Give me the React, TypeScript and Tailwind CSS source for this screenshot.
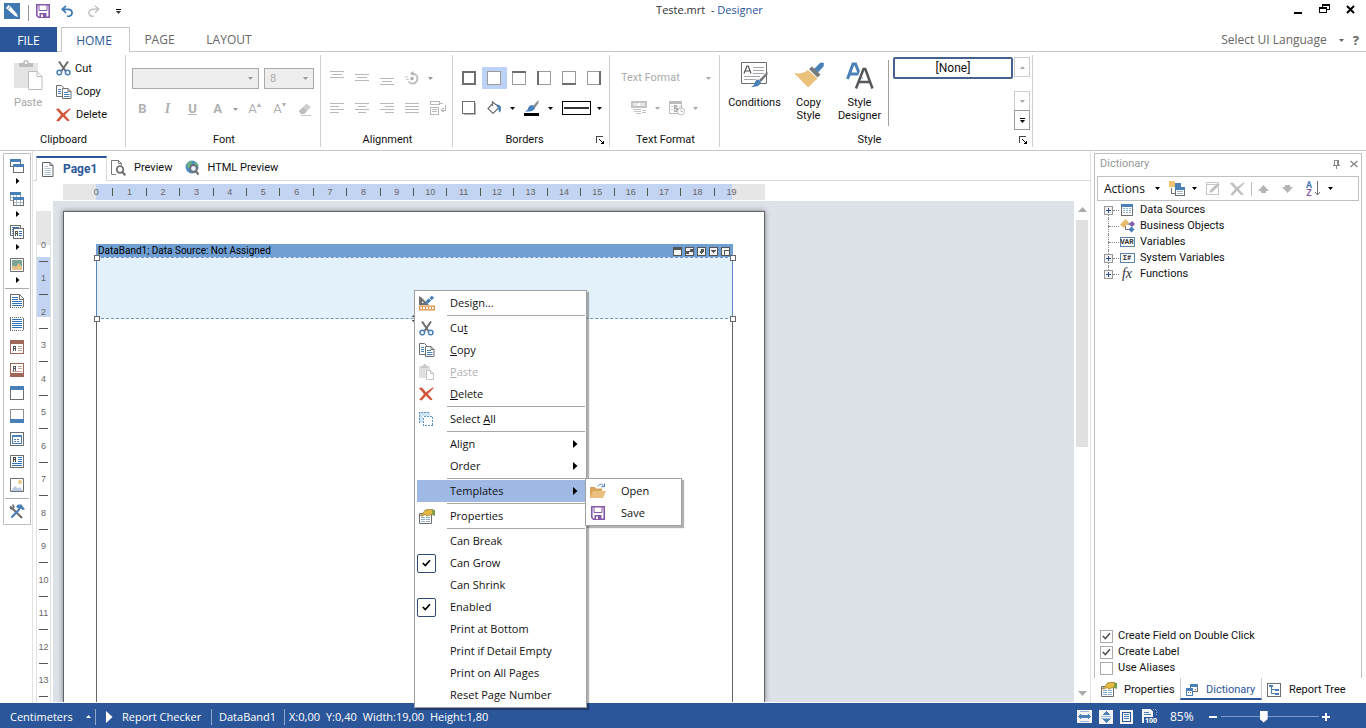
import { useState, type ReactNode } from "react";
import clsx from "clsx";

/* ---------- icons ---------- */

function Svg({
  w = 16,
  h,
  children,
  crisp = false,
}: {
  w?: number;
  h?: number;
  children: ReactNode;
  crisp?: boolean;
}) {
  const height = h ?? w;
  return (
    <svg
      width={w}
      height={height}
      viewBox={`0 0 ${w} ${height}`}
      fill="none"
      shapeRendering={crisp ? "crispEdges" : "auto"}
      className="shrink-0"
      aria-hidden="true"
    >
      {children}
    </svg>
  );
}

const Caret = ({ color = "#000" }: { color?: string }) => (
  <Svg w={5} h={3}>
    <path d="M0 0h5L2.5 3z" fill={color} />
  </Svg>
);

const RightArrow = () => (
  <Svg w={5} h={8}>
    <path d="M0 0v8l4.5-4z" fill="#000" />
  </Svg>
);

const SmallRight = () => (
  <Svg w={4} h={6}>
    <path d="M0 0v6l3.5-3z" fill="#000" />
  </Svg>
);

const LogoIcon = () => (
  <Svg w={16}>
    <path d="M0 0h16v16H0z" fill="#3f78b3" />
    <path d="M2 5 4.5 2l2 1.5 6.5 7.5 1 3-3-1L3.5 6.5z" fill="#fff" />
    <path d="M3.5 6.5 6.5 3.5" stroke="#3f78b3" strokeWidth=".7" />
  </Svg>
);

const SaveIcon = () => (
  <Svg w={14}>
    <path d="M.8.8h12.4v12.4H2.5L.8 11.5z" stroke="#8558a8" strokeWidth="1.6" />
    <path d="M3 1v5.5h8V1" stroke="#8558a8" strokeWidth="1" />
    <path d="M3.5 13.5V9h7v4.5" fill="#8558a8" />
    <path d="M5 10.5h2v2.5H5z" fill="#fff" />
  </Svg>
);

const UndoIcon = () => (
  <Svg w={14} h={12}>
    <path d="M5 .8 1.2 4.3 5 7.8M1.5 4.3H8a4 3.6 0 0 1 0 7H6" stroke="#3f78b3" strokeWidth="1.7" />
  </Svg>
);

const RedoIcon = () => (
  <Svg w={14} h={12}>
    <path d="M9 .8l3.8 3.5L9 7.8M12.5 4.3H6a4 3.6 0 0 0 0 7h2" stroke="#c4c4c4" strokeWidth="1.5" />
  </Svg>
);

const CutIcon = () => (
  <Svg w={15}>
    <path d="M3 .5 9.5 10M12 .5 5.5 10" stroke="#6d6e70" strokeWidth="2" />
    <circle cx="3.3" cy="11.5" r="2.3" stroke="#4a80b8" strokeWidth="1.5" />
    <circle cx="11.7" cy="11.5" r="2.3" stroke="#4a80b8" strokeWidth="1.5" />
  </Svg>
);

const CopyIcon = () => (
  <Svg w={16} h={14}>
    <path d="M6 11.5H.5V.5h5l2 2v2" stroke="#6d6e70" />
    <path d="M2 4.5h3M2 6.5h3M2 8.5h3" stroke="#4a80b8" />
    <path d="M6.5 3.5h5.5l3 3v7H6.5z" fill="#fff" stroke="#6d6e70" />
    <path d="M12 3.5v3h3" stroke="#6d6e70" />
    <path d="M8 7.5h4M8 9.5h5.5M8 11.5h5.5" stroke="#4a80b8" />
  </Svg>
);

const DeleteIcon = ({ color = "#d2583c" }: { color?: string }) => (
  <Svg w={15} h={14}>
    <path d="M0 1.2C1.5.2 3 .3 4 1.8L7 5.3 13.5.5l1.3.4L8.9 7l4.6 5.3-.6 1-2-.5L7 8.8 2.8 13.5l-2.6-.7L5 7z" fill={color} />
  </Svg>
);

const PasteBig = () => (
  <Svg w={29} h={31}>
    <path d="M0 3h24v25H0z" fill="#e4e4e4" />
    <path d="M5 3h4c0-4 6-4 6 0h4v4H5z" fill="#bdbdbd" />
    <circle cx="12" cy="2.7" r="1.2" fill="#fff" />
    <path d="M14.5 11.5H23l5 5v13H14.5z" fill="#fff" stroke="#bdbdbd" />
    <path d="M23 11.5v5h5" stroke="#bdbdbd" />
  </Svg>
);

const PasteSmall = () => (
  <Svg w={15} h={16}>
    <path d="M0 2h11v12H0z" fill="#e0e0e0" />
    <path d="M2 2h2c0-2.6 3.5-2.6 3.5 0H9v2H2z" fill="#c8c8c8" />
    <path d="M7.5 6.5h4l3 3v6h-7z" fill="#fff" stroke="#c4c4c4" />
    <path d="M11.5 6.5v3h3" stroke="#c4c4c4" />
  </Svg>
);

const EraserIcon = () => (
  <Svg w={14} h={14}>
    <path d="M1 9 8.5 1.5 13 5 6 12H3z" fill="#d0d0d0" />
    <path d="M1 9l4-3.5L9 9l-3 3H3z" fill="#bdbdbd" />
    <path d="M3 13.5h10" stroke="#c8c8c8" />
  </Svg>
);

const DesignIcon = () => (
  <Svg w={16}>
    <path d="M0 1l3 2 7 7H0z" fill="#6d6e70" />
    <path d="M3 6v2h2z" fill="#fff" />
    <path d="M6 9l1-3 6-5.5L15 3 9 8.5z" fill="#4a80b8" />
    <path d="M10 3l3 3" stroke="#fff" />
    <path d="M.7 11.2h14.6v3.6H.7z" fill="#fff" stroke="#dc8c3c" strokeWidth="1.2" />
    <path d="M3.5 12v2M6.5 12v2M9.5 12v2M12.5 12v2" stroke="#dc8c3c" />
  </Svg>
);

const SelectAllIcon = () => (
  <Svg w={15} crisp>
    <path d="M0 0h11v4H4v7H0z" fill="#cfe6f5" />
    <path d="M.5 11V.5H11" stroke="#5e93c4" strokeDasharray="2 1" />
    <path d="M4.5 4.5h9v9h-9z" fill="#fff" stroke="#5e93c4" strokeDasharray="2 1" />
  </Svg>
);

const PropertiesIcon = () => (
  <Svg w={16} h={15}>
    <path d="M.5 4.5h12v10H.5z" fill="#fff" stroke="#6d6e70" />
    <path d="M2 8.5h4M7 8.5h4M2 10.5h4M7 10.5h4M2 12.5h4M7 12.5h4" stroke="#8ab0cf" />
    <path d="M1 6.5 3.5 5 6 1.2 9 .5h5v5l-4 .5-2 1.2-2-1.7L3 7z" fill="#e5b83f" stroke="#8d7430" strokeWidth=".7" />
    <path d="M13.5 1H16v6l-2.5-1z" fill="#6f9f4b" />
  </Svg>
);

const OpenIcon = () => (
  <Svg w={16}>
    <path d="M0 15V4h5l1 1.5h6V8" fill="#d8a55c" />
    <path d="M3 8h13l-3 7H0z" fill="#eabf7f" />
    <path d="M8 3.5C9 .5 12 .5 13.5 3M14.5.5v3.2h-3.2" stroke="#4a80b8" />
  </Svg>
);

const PageIcon = () => (
  <Svg w={12} h={15}>
    <path d="M.5.5h7.5l3 3v11H.5z" fill="#fff" stroke="#5f6368" />
    <path d="M8 .5v3h3" stroke="#5f6368" />
    <path d="M2.5 4.5h4M2.5 6.5h6.5M2.5 8.5h6.5M2.5 10.5h6.5M2.5 12.5h6.5" stroke="#b3c6d9" />
  </Svg>
);

const PreviewIcon = () => (
  <Svg w={15} h={16}>
    <path d="M5 14.5H.5V.5h7l3 3v2M7.5.5v3h3" stroke="#77797c" />
    <circle cx="9" cy="9.5" r="3.3" fill="#fff" stroke="#6d6e70" strokeWidth="1.7" />
    <path d="m11.3 12 3 3.3" stroke="#6d6e70" strokeWidth="2.2" />
  </Svg>
);

const HtmlPreviewIcon = () => (
  <Svg w={14} h={16}>
    <circle cx="7" cy="7" r="6.5" fill="#4a8cc4" />
    <path d="M2 4c2-3 4-3 6-3L6 4l-1 3-3 1zM9 2l3 1 1 4-3-1z" fill="#6fb07a" />
    <circle cx="8.5" cy="8.5" r="3.3" fill="#e6eef5" stroke="#6d6e70" strokeWidth="1.7" />
    <path d="m10.8 11.3 2.8 3.3" stroke="#6d6e70" strokeWidth="2.2" />
  </Svg>
);

/* toolbox icons */
const BandsIcon = () => (
  <Svg w={14} h={14} crisp>
    <path d="M.5.5h10v7H.5z" fill="#fff" stroke="#6d6e70" />
    <path d="M0 0h11v3H0z" fill="#4a80b8" />
    <path d="M3.5 5.5h10v8h-10z" fill="#fff" stroke="#6d6e70" />
    <path d="M3 5h11v3H3z" fill="#4a80b8" />
  </Svg>
);
const CrossBandsIcon = () => (
  <Svg w={14} h={14} crisp>
    <path d="M.5.5h10v8H.5z" fill="#fff" stroke="#9a9c9f" />
    <path d="M0 0h11v3H0z" fill="#4a80b8" />
    <path d="M3.5 3v5M6.5 3v2M1 5.5h9" stroke="#9ec0dd" />
    <path d="M3.5 5.5h10v8h-10z" fill="#fff" stroke="#6d6e70" />
    <path d="M3 5h11v3H3z" fill="#4a80b8" />
    <path d="M6.5 8v5M10.5 8v5M4 10.5h9" stroke="#a9bccb" />
  </Svg>
);
const ComponentsIcon = () => (
  <Svg w={14} h={14} crisp>
    <path d="M.5.5h10v10H.5z" fill="#fff" stroke="#6d6e70" />
    <path d="M2 2.5h7M2 4.5h2M2 6.5h1M2 8.5h1" stroke="#2f74b8" />
    <path d="M3.5 3.5h10v10h-10z" fill="#fff" stroke="#6d6e70" />
    <path d="M5.5 11V6.5h2V11M5.5 8.5h2" stroke="#555" />
    <path d="M9 6.5h3M9 8.5h3M9 10.5h3" stroke="#2f74b8" />
  </Svg>
);
const PictureIcon = () => (
  <Svg w={14} h={14}>
    <path d="M.5.5h13v13H.5z" fill="#fff" stroke="#6d6e70" />
    <path d="M2 2h10v7H2z" fill="#79a693" />
    <path d="M2 12V9l2-1.5L6 9l2.5-4L12 9v3z" fill="#eac285" />
  </Svg>
);
const ReportTitleIcon = () => (
  <Svg w={14} h={14} crisp>
    <path d="M.5 13V.5h9l4 4V13" fill="#fff" stroke="#6d6e70" />
    <path d="M9.5 1v4h4" stroke="#6d6e70" />
    <path d="M0 13.5h14" stroke="#6d6e70" strokeDasharray="1 1" />
    <path d="M2 3h6v1H2zM2 5h6v1H2zM2 7h10v1H2zM2 9h10v1H2zM2 11h10v1H2z" fill="#2f74b8" />
  </Svg>
);
const ReportSummaryIcon = () => (
  <Svg w={14} h={14} crisp>
    <path d="M.5 1v12M13.5 1v12" stroke="#6d6e70" />
    <path d="M0 .5h14M0 13.5h14" stroke="#6d6e70" strokeDasharray="1 1" />
    <path d="M2 2h10v1H2zM2 4h10v1H2zM2 6h10v1H2zM2 8h10v1H2zM2 10h10v1H2z" fill="#2f74b8" />
  </Svg>
);
const TextBandIcon = ({ foot = false }: { foot?: boolean }) => (
  <Svg w={14} h={14} crisp>
    <path d="M.5.5h13v13H.5z" fill="#fff" stroke="#a0675a" />
    <path d={foot ? "M0 10h14v4H0z" : "M0 0h14v4H0z"} fill="#a0675a" />
    <path d={foot ? "M3.5 8V3.5h2V8M3.5 5.5h2" : "M3.5 11V6.5h2V11M3.5 8.5h2"} stroke="#555" />
    <path d={foot ? "M8 3.5h4M8 5.5h4M2 8.5h10" : "M8 6.5h4M8 8.5h4M8 10.5h4"} stroke="#c9a49b" />
  </Svg>
);
const BlueBandIcon = ({ foot = false }: { foot?: boolean }) => (
  <Svg w={14} h={14} crisp>
    <path d="M.5.5h13v13H.5z" fill="#fff" stroke={foot ? "#8f9194" : "#6d6e70"} />
    <path d={foot ? "M0 10h14v4H0z" : "M0 0h14v4H0z"} fill="#4a80b8" />
  </Svg>
);
const DataBandIcon = () => (
  <Svg w={14} h={14} crisp>
    <path d="M.5.5h13v13H.5z" fill="#fff" stroke="#6d6e70" />
    <path d="M2.5 3.5h9v8h-9z" stroke="#4a80b8" />
    <path d="M2 3h10v2H2z" fill="#4a80b8" />
    <path d="M4 7.5h2M7 7.5h2M4 9.5h2M7 9.5h2" stroke="#4a80b8" />
  </Svg>
);
const TextIcon = () => (
  <Svg w={14} h={13} crisp>
    <path d="M.5.5h13v12H.5z" fill="#fff" stroke="#6d6e70" />
    <path d="M3.5 7V2.5h2V7M3.5 4.5h2" stroke="#444" />
    <path d="M8 2h4v1H8zM8 4h4v1H8zM8 6h4v1H8zM2 8h10v1H2zM2 10h10v1H2z" fill="#2f74b8" />
  </Svg>
);
const ImageIcon = () => (
  <Svg w={14} h={14}>
    <path d="M.5.5h13v13H.5z" fill="#fff" stroke="#6d6e70" />
    <circle cx="10" cy="4" r="2" fill="#efc286" />
    <path d="M1 13l4-5 3 2.5L10 9l3 4z" fill="#b9cbe4" />
  </Svg>
);
const ToolsIcon = () => (
  <Svg w={16} h={15}>
    <path d="M1 2.5 4 5l9 9" stroke="#6d6e70" strokeWidth="2.2" />
    <path d="M3.5.5 5 3 3.5 5 1 4.5" stroke="#6d6e70" strokeWidth="1.5" />
    <path d="M10.5 5 2.5 13.5" stroke="#4a80b8" strokeWidth="2.2" />
    <path d="M7 2.5 9 .5h3.5l3.5 5-2.5.5-1.5-1.5-1.5 1.5z" fill="#4a80b8" />
  </Svg>
);

/* ---------- ribbon pieces ---------- */

const LINE = "#b8b8b8";

const Lines = ({ rows, y0 }: { rows: [number, number][]; y0: number }) => (
  <Svg w={14} h={14} crisp>
    {rows.map(([x, w], i) => (
      <path key={i} d={`M${x} ${y0 + i * 3 + 0.5}h${w}`} stroke={LINE} />
    ))}
  </Svg>
);

const RotateIcon = () => (
  <Svg w={15} h={14}>
    <path d="M7.5 2.5a5 5 0 1 1-4 8" stroke="#c0c0c0" strokeWidth="2" />
    <path d="M8.5 0v5L5 2.5z" fill="#b0b0b0" />
    <circle cx="7" cy="7.5" r="1.8" fill="#b0b0b0" />
    <path d="M0 6h3M1 8.5h3" stroke="#c8c8c8" />
  </Svg>
);

const WrapIcon = () => (
  <Svg w={16} h={14} crisp>
    <path d="M.5.5h9v3h-9zM.5 6.5h8v7h-8zM2 8.5h5M2 10.5h5M10 2.5h3" stroke={LINE} />
    <path d="M15.5 4v5H11M13.5 7 11 9l2.5 2" stroke={LINE} />
  </Svg>
);

type Side = "all" | "none" | "top" | "left" | "bottom" | "right";

const BORDER_PATH: Record<Side, string> = {
  all: "M1 1h12v12H1z",
  none: "",
  top: "M0 1h14",
  left: "M1 0v14",
  bottom: "M0 13h14",
  right: "M13 0v14",
};

const BorderIcon = ({ side }: { side: Side }) => (
  <Svg w={14} crisp>
    <path d="M.5.5h13v13H.5z" fill="#fff" stroke="#9b9b9b" />
    <path d={BORDER_PATH[side]} stroke="#6d6e70" strokeWidth="2" />
  </Svg>
);

const ShadowIcon = () => (
  <Svg w={14} crisp>
    <path d="M2 2h12v12H2z" fill="#b5b5b5" />
    <path d="M.5.5h12v12H.5z" fill="#fff" stroke="#6d6e70" />
  </Svg>
);

const FillIcon = () => (
  <Svg w={15} h={14}>
    <path d="M6.5 1.5 1 7.5l5 5 6-6zM5.5 0v5" fill="#fff" stroke="#6d6e70" strokeWidth="1.2" />
    <path d="M9 3.5c3-.5 5 1 5 3.5s-.5 4-1.5 4.5C11 10 12.5 7 9 3.5z" fill="#4a80b8" />
  </Svg>
);

const PenIcon = () => (
  <Svg w={15} h={16}>
    <path d="M14.5 0v3L10.5 8.5 8.5 6.5z" fill="#8a8c8f" />
    <path d="M8.5 5l2.5 3c-1 3-4 3.5-10.5 3.5l3-1.5c.5-3 2-5 5-5z" fill="#4a80b8" />
    <path d="M0 13h15v3H0z" fill="#000" />
  </Svg>
);

const MoneyIcon = () => (
  <Svg w={16} h={14} crisp>
    <path d="M0 0h16v7H0z" fill="#c4c4c4" />
    <path d="M2 2h12v3H2z" fill="#e6e6e6" />
    <circle cx="8" cy="3.5" r="1.5" fill="#fff" />
    <path d="M2 8.5h8M3 10.5h7M5 12.5h5M11 9.5h4M11 11.5h4" stroke="#c4c4c4" />
  </Svg>
);

const DateIcon = () => (
  <Svg w={16} h={16}>
    <path d="M.5 1.5h12v12H.5z" stroke="#bdbdbd" />
    <path d="M0 1h13v3H0z" fill="#bdbdbd" />
    <path d="M2 6.5h2M2 9.5h2M10 6.5h2" stroke="#d0d0d0" />
    <path d="M8.5 6h-3v2.5h3V11H5" stroke="#a0a0a0" strokeWidth="1.3" />
    <circle cx="12" cy="11.5" r="3.5" fill="#fff" stroke="#bdbdbd" />
    <path d="M12 9.5v2h2" stroke="#bdbdbd" />
  </Svg>
);

const ConditionsIcon = () => (
  <Svg w={27} h={26}>
    <path d="M.5.5h25v21H.5z" fill="#fff" stroke="#6d6e70" />
    <path d="M3 11.5 6 4h1.2L10 11.5M4.2 9h4.6" stroke="#505254" strokeWidth="1.2" />
    <path d="M12 5.5h11M12 8.5h11M12 11.5h11M3 14.5h16M3 17.5h12" stroke="#a5a7a9" />
    <path d="M26.5 9.5v3L20 20l-2-2z" fill="#77797c" />
    <path d="M17.5 17.5 20 20c-1.5 4.5-5 5-10 5l3-2c.5-3.5 2-5.5 4.5-5.5z" fill="#4a80b8" />
  </Svg>
);

const CopyStyleIcon = () => (
  <Svg w={30} h={26}>
    <path d="M20 7 26.5.5 30 1l-.5 3.5L24 10.5z" fill="#4a80b8" />
    <path d="m15 7 3-2.5 8.5 8-3 3z" fill="#77797c" />
    <path d="M0 11c6 1 10 0 14-3l9.5 8.5L14 25.5z" fill="#eac27c" />
  </Svg>
);

const StyleDesignerIcon = () => (
  <Svg w={28} h={27}>
    <path d="M1.5 17 7 2h2.5l6 15M4 12h8.5" stroke="#4a80b8" strokeWidth="3" />
    <path d="M9.5 26.5 17 7h2.5L27 26.5M12.5 20h12" stroke="#fff" strokeWidth="4.5" />
    <path d="M10 26.5 17.5 7h1.8L26.5 26.5M13 20h11" stroke="#55575a" strokeWidth="2.5" />
  </Svg>
);

const Launcher = () => (
  <Svg w={8} crisp>
    <path d="M.5 7V.5H7" stroke="#444" />
    <path d="M3.5 3.5l3 3" stroke="#000" />
    <path d="M8 4v4H4z" fill="#000" />
  </Svg>
);

function Group({
  caption,
  width,
  launcher = false,
  children,
}: {
  caption: string;
  width: string;
  launcher?: boolean;
  children: ReactNode;
}) {
  return (
    <section
      aria-label={caption}
      className={clsx("flex h-[92px] shrink-0 flex-col justify-between border-r border-[#d0d0d0]", width)}
    >
      <div>{children}</div>
      <div className="flex items-center pr-[5px] leading-[14px]">
        <span className={clsx("flex-1 text-center", !launcher && "pl-[7px]")}>{caption}</span>
        {launcher && (
          <button aria-label={`${caption} settings`}>
            <Launcher />
          </button>
        )}
      </div>
    </section>
  );
}

function Cell({
  label,
  selected = false,
  center = false,
  children,
}: {
  label: string;
  selected?: boolean;
  center?: boolean;
  children: ReactNode;
}) {
  return (
    <button
      aria-label={label}
      className={clsx(
        "flex h-[22px] w-[25px] items-center",
        center ? "justify-center" : "pl-[5px]",
        selected && "bg-[#bcd2f7]",
      )}
    >
      {children}
    </button>
  );
}

function BigButton({ icon, children }: { icon: ReactNode; children: ReactNode }) {
  return (
    <button className="flex w-[51px] flex-col items-center gap-[6px]">
      <span className="flex h-[30px] items-center">{icon}</span>
      <span className="leading-[13px]">{children}</span>
    </button>
  );
}

function Ribbon() {
  return (
    <div className="flex border-b border-[#c8c8c8] py-[3px] leading-4 text-[#111]">
      <Group caption="Clipboard" width="w-[126px]">
        <div className="flex">
          <button disabled className="ml-3 flex w-8 flex-col items-center gap-1 pt-[5px] text-[#a6a6a6]">
            <PasteBig />
            Paste
          </button>
          <div className="ml-3 flex flex-col pt-[2px]">
            <button className="flex h-[23px] items-center gap-1"><CutIcon />Cut</button>
            <button className="flex h-[23px] items-center gap-1"><CopyIcon />Copy</button>
            <button className="flex h-[23px] items-center gap-[5px]"><DeleteIcon />Delete</button>
          </div>
        </div>
      </Group>

      <Group caption="Font" width="w-[195px]">
        <div className="flex gap-[5px] pt-[13px] pl-[6px]">
          <div className="grid w-[127px] items-center">
            <select disabled aria-label="Font name" className="col-start-1 row-start-1 h-[21px] w-full appearance-none border border-[#aaa] bg-[#eee]" />
            <span className="col-start-1 row-start-1 mr-[6px] justify-self-end"><Caret color="#999" /></span>
          </div>
          <div className="grid w-[50px] items-center">
            <select disabled aria-label="Font size" className="col-start-1 row-start-1 h-[21px] w-full appearance-none border border-[#aaa] bg-[#eee] pl-[5px] text-[#aaa] opacity-100">
              <option>8</option>
            </select>
            <span className="col-start-1 row-start-1 mr-[6px] justify-self-end"><Caret color="#999" /></span>
          </div>
        </div>
        <div className="flex items-center pt-[9px] pl-1 text-[13px] text-[#b0b0b0]">
          <Cell label="Bold" center><b>B</b></Cell>
          <Cell label="Italic" center><i className="font-['Liberation_Serif',serif] text-[14px] font-bold">I</i></Cell>
          <Cell label="Underline" center><span className="font-bold underline">U</span></Cell>
          <Cell label="Font color" center><b>A</b></Cell>
          <span className="w-3 pl-[3px]"><Caret color="#999" /></span>
          <Cell label="Grow font" center>A<sup className="text-[8px]">▴</sup></Cell>
          <Cell label="Shrink font" center>A<sup className="text-[8px]">▾</sup></Cell>
          <Cell label="Clear format" center><EraserIcon /></Cell>
        </div>
      </Group>

      <Group caption="Alignment" width="w-[132px]">
        <div className="flex items-center pt-3 pl-1">
          <Cell label="Align top"><Lines y0={0} rows={[[0, 14], [2, 10], [0, 14]]} /></Cell>
          <Cell label="Align middle"><Lines y0={3} rows={[[0, 14], [2, 10], [0, 14]]} /></Cell>
          <Cell label="Align bottom"><Lines y0={7} rows={[[0, 14], [2, 10], [0, 14]]} /></Cell>
          <Cell label="Rotate"><RotateIcon /></Cell>
          <span className="pl-[3px]"><Caret color="#999" /></span>
        </div>
        <div className="flex items-center pt-2 pl-1">
          <Cell label="Align left"><Lines y0={2} rows={[[0, 14], [0, 9], [0, 14], [0, 9]]} /></Cell>
          <Cell label="Align center"><Lines y0={2} rows={[[0, 14], [3, 8], [0, 14], [3, 8]]} /></Cell>
          <Cell label="Align right"><Lines y0={2} rows={[[0, 14], [5, 9], [0, 14], [5, 9]]} /></Cell>
          <Cell label="Justify"><Lines y0={2} rows={[[0, 14], [0, 14], [0, 14], [0, 14]]} /></Cell>
          <Cell label="Wrap"><WrapIcon /></Cell>
        </div>
      </Group>

      <Group caption="Borders" width="w-[157px]" launcher>
        <div className="flex items-center pt-3 pl-1">
          <Cell label="All borders"><BorderIcon side="all" /></Cell>
          <Cell label="No border" selected><BorderIcon side="none" /></Cell>
          <Cell label="Top border"><BorderIcon side="top" /></Cell>
          <Cell label="Left border"><BorderIcon side="left" /></Cell>
          <Cell label="Bottom border"><BorderIcon side="bottom" /></Cell>
          <Cell label="Right border"><BorderIcon side="right" /></Cell>
        </div>
        <div className="flex items-center pt-2 pl-1">
          <Cell label="Shadow"><ShadowIcon /></Cell>
          <Cell label="Fill"><FillIcon /></Cell>
          <span className="w-3 pl-[3px]"><Caret /></span>
          <Cell label="Border color"><PenIcon /></Cell>
          <span className="w-[18px] pl-1"><Caret /></span>
          <button aria-label="Border style" className="flex h-[14px] w-[29px] items-center border border-black px-px">
            <span className="h-[2px] w-full bg-[#333]" />
          </button>
          <span className="pl-[6px]"><Caret /></span>
        </div>
      </Group>

      <Group caption="Text Format" width="w-[110px]">
        <button disabled className="flex w-full items-center justify-between pt-[15px] pr-2 pl-[11px] text-[#aaa]">
          Text Format
          <Caret color="#aaa" />
        </button>
        <div className="flex items-center pt-[11px] pl-4">
          <Cell label="Currency"><MoneyIcon /></Cell>
          <span className="w-[13px] pl-1"><Caret color="#aaa" /></span>
          <Cell label="Date"><DateIcon /></Cell>
          <span className="pl-1"><Caret color="#aaa" /></span>
        </div>
      </Group>

      <Group caption="Style" width="w-[313px]" launcher>
        <div className="flex items-start pl-[9px]">
          <div className="flex items-start pt-[5px]">
            <BigButton icon={<ConditionsIcon />}>Conditions</BigButton>
            <span className="w-[3px]" />
            <BigButton icon={<CopyStyleIcon />}>Copy<br />Style</BigButton>
            <BigButton icon={<StyleDesignerIcon />}>Style<br />Designer</BigButton>
          </div>
          <div className="mt-[5px] ml-[3px] h-[66px] w-px bg-[#a0a0a0]" />
          <div className="mt-[2px] ml-1 flex gap-px">
            <button className="flex h-[22px] w-[120px] items-center justify-center rounded-[2px] border-2 border-[#44618f] text-[12px]">[None]</button>
            <div className="flex w-4 flex-col">
              <button aria-label="Scroll up" className="flex h-5 items-center justify-center border border-[#ccc]">
                <span className="rotate-180"><Caret color="#aaa" /></span>
              </button>
              <button aria-label="Scroll down" className="mt-[14px] flex h-[19px] items-center justify-center border border-b-0 border-[#ccc]"><Caret color="#aaa" /></button>
              <button aria-label="More styles" className="flex h-5 flex-col items-center justify-center gap-px border border-[#999]">
                <span className="h-px w-[5px] bg-black" />
                <Caret />
              </button>
            </div>
          </div>
        </div>
      </Group>
    </div>
  );
}

/* ---------- header ---------- */

function TitleBar() {
  return (
    <header className="flex h-[27px] shrink-0 items-start pt-[3px] pl-1">
      <LogoIcon />
      <div className="mt-[2px] ml-2 h-4 w-px bg-[#999]" />
      <div className="flex items-center gap-[11px] pt-px pl-[7px]">
        <button aria-label="Save"><SaveIcon /></button>
        <button aria-label="Undo"><UndoIcon /></button>
        <button aria-label="Redo"><RedoIcon /></button>
        <button aria-label="Customize" className="ml-[5px] flex flex-col items-center gap-px">
          <span className="h-px w-[5px] bg-black" />
          <Caret color="#333" />
        </button>
      </div>
      <h1 className="flex-1 pl-[5px] text-center font-['Open_Sans',sans-serif] text-[11px] leading-[14px] text-[#333]">
        Teste.mrt &nbsp;- <span className="text-[#2b579a]">Designer</span>
      </h1>
      <div className="flex items-center gap-4 pt-px pr-[11px]">
        <button aria-label="Minimize"><Svg w={10} crisp><path d="M1 8h8v2H1z" fill="#000" /></Svg></button>
        <button aria-label="Restore">
          <Svg w={11} h={10} crisp>
            <path d="M3.5 3V.5h7v5H8M3 1.5h8M.5 3.5h7v5h-7zM0 4.5h8" stroke="#000" />
          </Svg>
        </button>
        <button aria-label="Close"><Svg w={9}><path d="M1 1l7 7M8 1 1 8" stroke="#000" strokeWidth="2" /></Svg></button>
      </div>
    </header>
  );
}

function RibbonTabs() {
  return (
    <nav className="flex h-[25px] shrink-0 border-b border-[#c8c8c8] font-['Open_Sans',sans-serif] text-[12px] text-[#666]">
      <button className="-mb-px w-[57px] bg-[#2b579a] pt-[2px] text-white">FILE</button>
      <button className="-mb-px ml-1 w-[69px] border border-b-0 border-[#c8c8c8] bg-white pt-px pr-[3px] text-[#2b579a]">HOME</button>
      <button className="w-[59px] pt-[2px]">PAGE</button>
      <button className="w-20 pt-[2px]">LAYOUT</button>
      <button className="ml-auto flex items-center gap-3 pt-[2px]">
        Select UI Language
        <Caret color="#666" />
      </button>
      <button className="ml-[9px] pt-[2px] pr-[7px] text-[13px] font-bold">?</button>
    </nav>
  );
}

/* ---------- toolbox ---------- */

const TOOL_GROUPS = [
  { label: "Bands", icon: <BandsIcon /> },
  { label: "Cross bands", icon: <CrossBandsIcon /> },
  { label: "Components", icon: <ComponentsIcon /> },
  { label: "Shapes", icon: <PictureIcon /> },
];

const TOOLS = [
  { label: "Report title", icon: <ReportTitleIcon /> },
  { label: "Report summary", icon: <ReportSummaryIcon /> },
  { label: "Page header", icon: <TextBandIcon /> },
  { label: "Page footer", icon: <TextBandIcon foot /> },
  { label: "Header band", icon: <BlueBandIcon /> },
  { label: "Footer band", icon: <BlueBandIcon foot /> },
  { label: "Data band", icon: <DataBandIcon /> },
  { label: "Text", icon: <TextIcon /> },
  { label: "Image", icon: <ImageIcon /> },
];

function Toolbox() {
  return (
    <aside className="mt-[2px] ml-[3px] flex w-7 shrink-0 flex-col items-center self-start border border-[#c0c0c0] pt-px">
      {TOOL_GROUPS.map((t) => (
        <button key={t.label} aria-label={t.label} className="flex h-[33px] flex-col items-center gap-[5px] pt-1">
          {t.icon}
          <span className="pl-[2px]"><SmallRight /></span>
        </button>
      ))}
      <div className="mt-px h-px w-6 bg-[#aaa]" />
      {TOOLS.map((t) => (
        <button key={t.label} aria-label={t.label} className="flex h-[23px] items-start pt-[5px]">
          {t.icon}
        </button>
      ))}
      <div className="mt-[2px] h-px w-6 bg-[#aaa]" />
      <button aria-label="Services" className="flex h-[25px] items-center"><ToolsIcon /></button>
    </aside>
  );
}

/* ---------- designer surface ---------- */

function HorizontalRuler() {
  const marks = Array.from({ length: 20 }, (_, i) => i);
  return (
    <div className="mt-[3px] ml-[30px] grid h-[15px] w-[702px] shrink-0 font-['Liberation_Sans',sans-serif] text-[9px] text-[#666]">
      <div className="col-start-1 row-start-1 flex bg-[#e6e6e6] px-[33px]">
        <div className="flex-1 bg-[#c2d4f2]" />
      </div>
      <div className="col-start-1 row-start-1 mr-[17px] ml-[17px] flex items-center">
        {marks.map((n) => (
          <div key={n} className="flex flex-1 items-center">
            <span className="flex-1 text-center">{n}</span>
            {n < 19 && <span className="h-2 w-px bg-[#555]" />}
          </div>
        ))}
      </div>
    </div>
  );
}

function VerticalRuler() {
  const marks = Array.from({ length: 14 }, (_, i) => i);
  return (
    <div className="mt-[10px] mr-[2px] ml-[3px] grid w-[15px] shrink-0 grid-rows-[1fr] overflow-hidden border-x border-[#e0e0e0] font-['Liberation_Sans',sans-serif] text-[9px] text-[#666]">
      <div className="col-start-1 row-start-1">
        <div className="h-[34px] bg-[#e6e6e6]" />
        <div className="mt-3 h-[60px] bg-[#c2d4f2]" />
      </div>
      <div className="col-start-1 row-start-1 flex h-[486px] flex-col pt-[17px]">
        {marks.map((n) => (
          <div key={n} className="flex flex-1 flex-col items-center">
            <span className="flex flex-1 items-center pt-px">{n}</span>
            <span className="h-px w-[9px] bg-[#555]" />
          </div>
        ))}
      </div>
    </div>
  );
}

const Handle = ({ place }: { place: string }) => (
  <span className={clsx("absolute size-[6px] border border-[#666] bg-white", place)} />
);

const BAND_BUTTONS = [
  { label: "Header", d: "M0 0h9v3H0z", s: "" },
  { label: "Relation", d: "M1 4h3v3H1zM5 2h3v3H5z", s: "M3 4.5h3" },
  { label: "Expand", d: "M3 2h4v4L6 5 4 7 2 5l2-2z", s: "" },
  { label: "Menu", d: "M2 3h5L4.5 6z", s: "" },
  { label: "Copies", d: "", s: "M3.5 3.5h5v5h-5z" },
];

function Band() {
  return (
    <div>
      <div className="flex h-[13px] items-center justify-between bg-[#709fd3] pt-px pr-[3px] pl-[2px] text-[10px] leading-3 text-black">
        <span>DataBand1; Data Source: Not Assigned</span>
        <div className="flex gap-[3px]">
          {BAND_BUTTONS.map((b) => (
            <button key={b.label} aria-label={b.label}>
              <Svg w={9} crisp>
                <path d="M.5.5h8v8h-8z" fill="#f4f4f4" stroke="#555" />
                <path d={b.d} fill="#555" />
                <path d={b.s} stroke="#555" />
              </Svg>
            </button>
          ))}
        </div>
      </div>
      <div className="relative h-[62px] border border-x-[#5b86c0] border-y-[#6f93c4] bg-[#e3f2fa] [border-style:dashed_solid]">
        <Handle place="-top-[3px] -left-[3px]" />
        <Handle place="-top-[3px] -right-1" />
        <Handle place="-bottom-1 -left-[3px]" />
        <Handle place="-bottom-1 -right-1" />
        <span className="absolute -bottom-[5px] left-1/2 -translate-x-1/2">
          <Svg w={9}><path d="M4.5 0 8 3H1zM4.5 9 8 6H1z" fill="#444" /></Svg>
        </span>
      </div>
    </div>
  );
}

function DesignSurface() {
  return (
    <main className="mr-[3px] ml-px flex min-w-0 flex-1 flex-col border-x border-[#e2e2e2] pt-[5px] pb-px">
      <nav className="flex h-[25px] shrink-0 items-stretch border-b border-[#d8d8d8] pl-[3px]">
        <button className="-mb-px flex w-[71px] items-center gap-[9px] border-x border-t-2 border-[#d8d8d8] border-t-[#2b579a] bg-white pb-px pl-[5px] text-[12px] font-bold text-[#2b579a]">
          <PageIcon />
          Page1
        </button>
        <button className="flex items-center gap-2 pl-1"><PreviewIcon />Preview</button>
        <button className="ml-[13px] flex items-center gap-2"><HtmlPreviewIcon />HTML Preview</button>
      </nav>
      <HorizontalRuler />
      <div className="mt-[2px] flex min-h-0 flex-1">
        <VerticalRuler />
        <div className="flex min-w-0 flex-1 flex-col overflow-hidden bg-[#dde1e8] pt-[10px] pl-[10px]">
          <div className="flex w-[702px] flex-1 flex-col border border-b-0 border-[#606468] bg-white pt-8 pr-[31px] pl-8 shadow-[0_0_5px_rgba(0,0,0,0.45)]">
            <Band />
            <div className="flex-1 border-x border-[#666]" />
          </div>
        </div>
        <div className="flex w-4 shrink-0 flex-col items-center pt-[6px]">
          <span className="rotate-180"><Svg w={9} h={5}><path d="M0 0h9L4.5 5z" fill="#aaa" /></Svg></span>
          <div className="mt-2 h-[227px] w-3 bg-[#e1e1e1]" />
          <span className="mt-auto mb-[6px]"><Svg w={9} h={5}><path d="M0 0h9L4.5 5z" fill="#aaa" /></Svg></span>
        </div>
      </div>
    </main>
  );
}

/* ---------- dictionary ---------- */

const NewItemIcon = () => (
  <Svg w={16} h={15} crisp>
    <path d="M4 2h8v4H4z" fill="#4a80b8" />
    <path d="M0 0h6v6H0z" fill="#efc274" />
    <path d="M2.5 7v5H6" stroke="#6d6e70" />
    <path d="M6.5 6.5h9v8h-9z" fill="#fff" stroke="#6d6e70" />
    <path d="M6 6h10v3H6z" fill="#4a80b8" />
    <path d="M8 10.5h6M8 12.5h6" stroke="#9ab6d0" />
  </Svg>
);

const EditIcon = () => (
  <Svg w={14} h={13}>
    <path d="M.5.5h12v12H.5zM1 2.5h11" stroke="#c4c4c4" />
    <path d="M3 11l1-3 8-7.5L14 3 6 10.5z" fill="#bdbdbd" stroke="#fff" strokeWidth=".6" />
  </Svg>
);

const TableIcon = () => (
  <Svg w={12} h={12} crisp>
    <path d="M.5.5h11v11H.5z" fill="#fff" stroke="#6d6e70" />
    <path d="M0 0h12v3H0z" fill="#4a80b8" />
    <path d="M2 4.5h2M5 4.5h2M8 4.5h2M2 6.5h2M5 6.5h2M8 6.5h2M2 8.5h2M5 8.5h2M8 8.5h2" stroke="#8ab0cf" />
  </Svg>
);

const BusinessIcon = () => (
  <Svg w={15} h={14}>
    <path d="M5.5 6v4.5H10M7 5h5" stroke="#6d6e70" />
    <path d="M0 5.5 5.5 0 9 3.5 3.5 9z" fill="#e9bd6d" />
    <path d="M9 5l3-3 3 3-3 3z" fill="#7e5aa8" />
    <path d="M8.5 10.5l3-3 3 3-3 3z" fill="#4a80b8" />
  </Svg>
);

const Boxed = ({ children }: { children: string }) => (
  <span className="flex h-[10px] w-[15px] items-center justify-center border border-[#5b84ad] text-[7px] leading-none font-bold text-[#333]">
    {children}
  </span>
);

const TREE = [
  { label: "Data Sources", expandable: true, icon: <TableIcon /> },
  { label: "Business Objects", expandable: false, icon: <BusinessIcon /> },
  { label: "Variables", expandable: false, icon: <Boxed>VAR</Boxed> },
  { label: "System Variables", expandable: true, icon: <Boxed>Σ#</Boxed> },
  {
    label: "Functions",
    expandable: true,
    icon: <i className="font-['Liberation_Serif',serif] text-[14px] leading-4 text-[#333]">fx</i>,
  },
];

function Tree() {
  return (
    <ul className="pt-px pl-[9px]">
      {TREE.map((n, i) => (
        <li key={n.label} className="flex h-4 items-center">
          <div className="flex h-4 w-[9px] flex-col items-center">
            <span className={clsx("flex-1 border-l border-dotted", i === 0 ? "border-transparent" : "border-[#888]")} />
            {n.expandable && (
              <button aria-label={`Expand ${n.label}`}>
                <Svg w={9} crisp>
                  <path d="M.5.5h8v8h-8z" fill="#f2f2f2" stroke="#999" />
                  <path d="M2 4.5h5M4.5 2v5" stroke="#2f4f8f" />
                </Svg>
              </button>
            )}
            <span className={clsx("flex-1 border-l border-dotted", i === 4 ? "border-transparent" : "border-[#888]")} />
          </div>
          <span className={clsx("border-t border-dotted border-[#888]", n.expandable ? "w-[6px]" : "-ml-1 w-[10px]")} />
          <span className="flex w-4 justify-center">{n.icon}</span>
          <span className="pl-[5px]">{n.label}</span>
        </li>
      ))}
    </ul>
  );
}

const Check = ({ color = "#000" }: { color?: string }) => (
  <Svg w={9} h={8}>
    <path d="M.8 4 3.3 6.5 8 1.2" stroke={color} strokeWidth="1.7" />
  </Svg>
);

function PanelCheck({ label, initial }: { label: string; initial: boolean }) {
  const [on, setOn] = useState(initial);
  return (
    <label className="flex h-4 items-center gap-[5px]">
      <span className="grid place-items-center">
        <input
          type="checkbox"
          checked={on}
          onChange={(e) => setOn(e.target.checked)}
          className="col-start-1 row-start-1 size-[13px] appearance-none border border-[#aaa] bg-white"
        />
        {on && <span className="pointer-events-none col-start-1 row-start-1"><Check color="#555" /></span>}
      </span>
      {label}
    </label>
  );
}

const PanelTabIcon = () => (
  <Svg w={12} h={12} crisp>
    <path d="M4.5.5h7v7h-7z" fill="#fff" stroke="#6d6e70" />
    <path d="M4 0h8v3H4z" fill="#4a80b8" />
    <path d="M.5 4.5h6v7h-6z" fill="#fff" stroke="#4a80b8" />
    <path d="M0 4h7v3H0z" fill="#4a80b8" />
    <path d="M2 8.5h1M4 8.5h1M9 5.5h1" stroke="#6d6e70" />
  </Svg>
);

const ReportTreeIcon = () => (
  <Svg w={14} h={14} crisp>
    <path d="M.5.5h13v13H.5z" fill="#fff" stroke="#6d6e70" />
    <path d="M4.5 3v8M5 6.5h3M5 10.5h3" stroke="#4a80b8" />
    <path d="M8 6h4v2H8zM8 10h4v2H8zM2 2h4v2H2z" fill="#4a80b8" />
  </Svg>
);

function DictionaryPanel() {
  return (
    <aside className="mt-[2px] mr-1 flex w-[268px] shrink-0 flex-col">
      <div className="flex flex-1 flex-col border border-b-0 border-[#c0c0c0]">
        <div className="flex h-[22px] items-center pr-[3px] pb-[2px] pl-[5px] text-[#999]">
          <h2 className="flex-1">Dictionary</h2>
          <button aria-label="Pin" className="mr-[10px]">
            <Svg w={7} h={9} crisp>
              <path d="M1.5 0v5M5.5 0v5M1 .5h5M4.5 1v4M0 5.5h7M3.5 6v3" stroke="#888" />
            </Svg>
          </button>
          <button aria-label="Close panel"><Svg w={8}><path d="M.5 1 7.5 7M7.5 1 .5 7" stroke="#888" strokeWidth="1.5" /></Svg></button>
        </div>
        <div className="mr-[2px] ml-[2px] flex h-[25px] items-center border border-[#c0c0c0] pl-[6px]">
          <button className="flex items-center gap-[10px] font-['Open_Sans',sans-serif] text-[12px]">Actions<Caret /></button>
          <button aria-label="New item" className="ml-[9px] flex items-center gap-[7px]"><NewItemIcon /><Caret /></button>
          <button aria-label="Edit" className="ml-[9px]"><EditIcon /></button>
          <button aria-label="Delete item" className="ml-[10px]"><DeleteIcon color="#c0c0c0" /></button>
          <span className="ml-[6px] h-[14px] w-px bg-[#bbb]" />
          <button aria-label="Move up" className="ml-[6px]"><Svg w={11} h={8}><path d="M5.5 0 11 6H8v2H3V6H0z" fill="#b5b5b5" /></Svg></button>
          <button aria-label="Move down" className="ml-[13px]"><Svg w={11} h={8}><path d="M5.5 8 11 2H8V0H3v2H0z" fill="#b5b5b5" /></Svg></button>
          <button aria-label="Sort" className="ml-[13px] flex items-center gap-2">
            <span className="flex items-center gap-[3px]">
              <span className="flex flex-col text-[9px] leading-[8px] font-bold">
                <span className="text-[#4a80b8]">A</span>
                <span className="text-[#8558a8]">Z</span>
              </span>
              <Svg w={5} h={15}><path d="M2.5 0v14M0 11l2.5 3L5 11" stroke="#6d6e70" /></Svg>
            </span>
            <Caret />
          </button>
        </div>
        <Tree />
        <div className="mt-auto pb-[2px] pl-[5px]">
          <PanelCheck label="Create Field on Double Click" initial />
          <PanelCheck label="Create Label" initial />
          <PanelCheck label="Use Aliases" initial={false} />
        </div>
      </div>
      <nav className="mb-[3px] flex h-[22px]">
        <button className="flex w-[86px] items-center gap-[7px] pt-px pl-[7px]"><PropertiesIcon />Properties</button>
        <button className="flex w-[82px] items-center gap-2 border-x border-b-2 border-[#ccc] border-b-[#2b579a] pt-[3px] pl-[5px] text-[#2b579a]"><PanelTabIcon />Dictionary</button>
        <button className="flex items-center gap-2 pt-px pl-[5px]"><ReportTreeIcon />Report Tree</button>
      </nav>
    </aside>
  );
}

/* ---------- context menu ---------- */

type MenuItem =
  | { kind: "sep" }
  | { kind: "item"; label: ReactNode; icon?: ReactNode; sub?: boolean; disabled?: boolean; active?: boolean }
  | { kind: "check"; label: string; checked?: boolean };

const MENU: MenuItem[] = [
  { kind: "item", label: "Design...", icon: <DesignIcon /> },
  { kind: "sep" },
  { kind: "item", label: <>Cu<u>t</u></>, icon: <CutIcon /> },
  { kind: "item", label: <><u>C</u>opy</>, icon: <CopyIcon /> },
  { kind: "item", label: <><u>P</u>aste</>, icon: <PasteSmall />, disabled: true },
  { kind: "item", label: <><u>D</u>elete</>, icon: <DeleteIcon /> },
  { kind: "sep" },
  { kind: "item", label: <>Select <u>A</u>ll</>, icon: <SelectAllIcon /> },
  { kind: "sep" },
  { kind: "item", label: "Align", sub: true },
  { kind: "item", label: "Order", sub: true },
  { kind: "sep" },
  { kind: "item", label: "Templates", sub: true, active: true },
  { kind: "sep" },
  { kind: "item", label: "Properties", icon: <PropertiesIcon /> },
  { kind: "sep" },
  { kind: "check", label: "Can Break" },
  { kind: "check", label: "Can Grow", checked: true },
  { kind: "check", label: "Can Shrink" },
  { kind: "check", label: "Enabled", checked: true },
  { kind: "check", label: "Print at Bottom" },
  { kind: "check", label: "Print if Detail Empty" },
  { kind: "check", label: "Print on All Pages" },
  { kind: "check", label: "Reset Page Number" },
];

function MenuCheck({ label, initial = false }: { label: string; initial?: boolean }) {
  const [on, setOn] = useState(initial);
  return (
    <label className="flex h-[22px] items-center">
      <span className="grid w-[33px] place-items-center justify-start">
        <input
          type="checkbox"
          checked={on}
          onChange={(e) => setOn(e.target.checked)}
          className="col-start-1 row-start-1 size-[19px] appearance-none rounded-[2px] border border-transparent checked:border-[#2f4a75]"
        />
        {on && <span className="pointer-events-none col-start-1 row-start-1"><Check /></span>}
      </span>
      {label}
    </label>
  );
}

function ContextMenu() {
  return (
    <div className="absolute top-[290px] left-[414px] w-[173px] border border-[#a0a0a0] bg-white py-px pl-[2px] font-['Open_Sans',sans-serif] text-[11px] text-[#111] shadow-[2px_2px_1px_rgba(0,0,0,0.3)]">
      {MENU.map((m, i) => {
        if (m.kind === "sep") {
          return <div key={i} className="my-px mr-px ml-[30px] h-px bg-[#a8a8a8]" />;
        }
        if (m.kind === "check") {
          return <MenuCheck key={i} label={m.label} initial={m.checked} />;
        }
        return (
          <button
            key={i}
            disabled={m.disabled}
            className={clsx(
              "flex h-[22px] w-full items-center pr-2",
              m.disabled && "text-[#b0b0b0]",
              m.active && "bg-[#9fb9e5]",
            )}
          >
            <span className="flex w-[33px] pl-[2px]">{m.icon}</span>
            <span className="flex-1 text-left">{m.label}</span>
            {m.sub && <RightArrow />}
          </button>
        );
      })}
      <div className="absolute top-[187px] left-[170px] w-[97px] border border-[#a0a0a0] bg-white py-px shadow-[2px_2px_1px_rgba(0,0,0,0.3)]">
        <button className="flex h-[22px] items-center pl-1"><span className="w-[31px]"><OpenIcon /></span>Open</button>
        <button className="flex h-[22px] items-center pl-[5px]"><span className="w-[30px]"><SaveIcon /></span>Save</button>
      </div>
    </div>
  );
}

/* ---------- status bar ---------- */

const Divider = () => <span className="h-4 w-px bg-[#8fa7cc]" />;

function StatusBar() {
  const [zoom, setZoom] = useState(43);
  return (
    <footer className="flex h-[25px] shrink-0 items-center bg-[#2b579a] pt-[2px] font-['Open_Sans',sans-serif] text-[11px] text-white">
      <button className="flex w-[95px] items-center justify-between pr-1 pl-[10px]">
        Centimeters
        <span className="rotate-180"><Caret color="#fff" /></span>
      </button>
      <Divider />
      <button className="flex w-[115px] items-center gap-[9px] pl-[10px]">
        <Svg w={7} h={12}><path d="M0 0v12l6.5-6z" fill="#fff" /></Svg>
        Report Checker
      </button>
      <Divider />
      <span className="w-[72px] pl-[7px]">DataBand1</span>
      <Divider />
      <div className="flex gap-[6px] pl-1">
        <span>X:0,00</span>
        <span>Y:0,40</span>
        <span>Width:19,00</span>
        <span>Height:1,80</span>
      </div>
      <div className="ml-auto flex items-center gap-[7px]">
        <button aria-label="Fit width">
          <Svg w={15} h={13} crisp>
            <path d="M0 0h15v13H0z" fill="#f4f4f4" />
            <path d="M1 6.5 4 3v2h7V3l3 3.5L11 10V8H4v2z" fill="#4a80b8" />
            <path d="M3 1.5h9M3 11.5h9" stroke="#9db8d6" />
          </Svg>
        </button>
        <button aria-label="Fit height">
          <Svg w={14} h={14} crisp>
            <path d="M0 0h14v14H0z" fill="#f4f4f4" />
            <path d="M7 1l4 4H3zM7 13l4-4H3z" fill="#4a80b8" />
            <path d="M2 6.5h10M2 8.5h10" stroke="#9db8d6" />
          </Svg>
        </button>
        <button aria-label="One page">
          <Svg w={14} h={14} crisp>
            <path d="M0 0h13v14H0z" fill="#f4f4f4" />
            <path d="M2.5 2.5h8v9h-8z" stroke="#2b579a" />
            <path d="M4 4.5h5M4 6.5h5M4 8.5h5" stroke="#4a80b8" />
          </Svg>
        </button>
        <button aria-label="Actual size">
          <span className="grid">
            <span className="col-start-1 row-start-1">
              <Svg w={16} h={15} crisp>
                <path d="M1 14V0h8l3 3v11z" fill="#f4f4f4" />
                <path d="M3 3.5h5M3 5.5h7" stroke="#4a80b8" />
                <path d="M12 .5h3.5V7" stroke="#8fa7cc" strokeDasharray="1 1" />
                <path d="M3 8h13v7H3z" fill="#2b579a" />
              </Svg>
            </span>
            <span className="col-start-1 row-start-1 self-end justify-self-end text-[7px] leading-[7px] font-bold">100</span>
          </span>
        </button>
        <span className="w-[38px] pl-[6px] text-[12px]">85%</span>
        <button aria-label="Zoom out"><Svg w={9} h={8} crisp><path d="M0 3h8v2H0z" fill="#fff" /></Svg></button>
        <input
          type="range"
          aria-label="Zoom"
          min={0}
          max={100}
          value={zoom}
          onChange={(e) => setZoom(Number(e.target.value))}
          className="-mx-1 h-3 w-[98px] appearance-none bg-[linear-gradient(#7f9cc8,#7f9cc8)] bg-[length:100%_1px] bg-center bg-no-repeat [&::-webkit-slider-thumb]:h-3 [&::-webkit-slider-thumb]:w-2 [&::-webkit-slider-thumb]:appearance-none [&::-webkit-slider-thumb]:bg-white [&::-webkit-slider-thumb]:[clip-path:polygon(0_0,100%_0,100%_70%,50%_100%,0_70%)]"
        />
        <button aria-label="Zoom in" className="mr-9"><Svg w={8} crisp><path d="M0 3h8v2H0zM3 0h2v8H3z" fill="#fff" /></Svg></button>
      </div>
    </footer>
  );
}

export default function App() {
  return (
    <div className="relative flex h-screen flex-col overflow-hidden bg-white font-[Roboto,sans-serif] text-[11px] leading-4 text-[#111]">
      <TitleBar />
      <RibbonTabs />
      <Ribbon />
      <div className="flex min-h-0 flex-1">
        <Toolbox />
        <DesignSurface />
        <DictionaryPanel />
      </div>
      <StatusBar />
      <ContextMenu />
    </div>
  );
}
